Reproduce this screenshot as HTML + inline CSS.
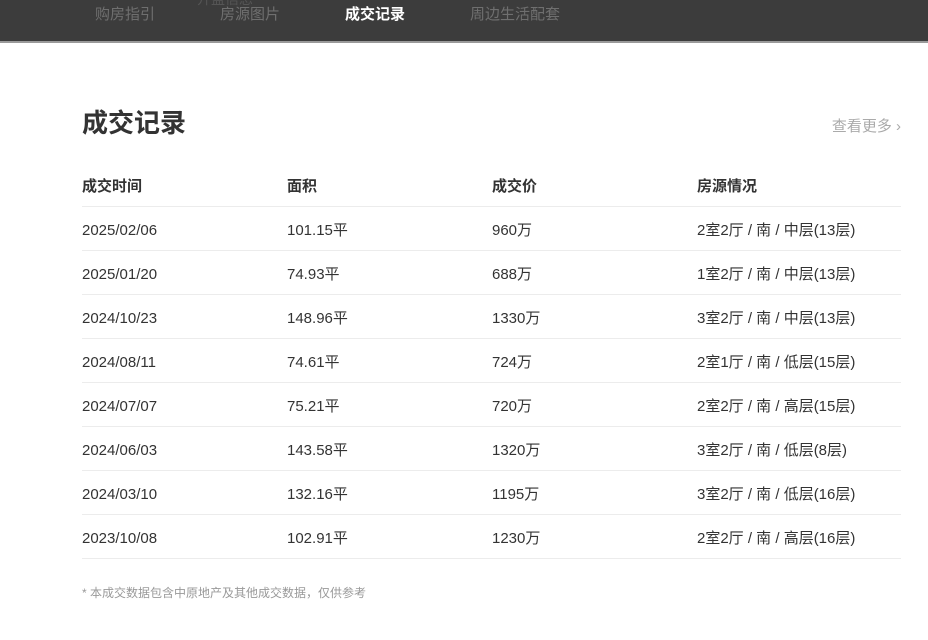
<!DOCTYPE html>
<html><head><meta charset="utf-8"><style>
body{margin:0;width:928px;height:640px;background:#fff;font-family:"Liberation Sans","Noto Sans CJK SC",sans-serif;overflow:hidden;position:relative}
.nav{position:absolute;left:0;top:0;width:928px;height:41px;background:#3c3c3c;border-bottom:2px solid #9a9a9a}
.nav span{position:absolute;top:5px;font-size:15px;line-height:20px;color:#6f6f6f}
.nav .a{color:#fff;font-weight:bold}
h1{position:absolute;left:82px;top:105px;margin:0;font-size:26px;line-height:36px;color:#333;font-weight:bold}
.more{position:absolute;right:27px;top:117px;font-size:15px;line-height:20px;color:#aaa}
.t{position:absolute;left:82px;top:163px;width:819px}
.r{height:43px;border-bottom:1px solid #ececec;position:relative;font-size:15px;color:#333}
.r span{position:absolute;top:14px;line-height:20px}
.h{font-weight:bold;font-size:15px}
.c1{left:0}.c2{left:205px}.c3{left:410px}.c4{left:615px}
.note{position:absolute;left:82px;top:585px;font-size:12px;line-height:16px;color:#999}
</style></head><body>
<div class="nav">
<span style="left:95px">购房指引</span>
<span style="left:220px">房源图片</span>
<span style="left:197px;top:-11px;color:#555;font-size:14px">开盘信息</span>
<span class="a" style="left:345px">成交记录</span>
<span style="left:470px">周边生活配套</span>
</div>
<h1>成交记录</h1>
<div class="more">查看更多 ›</div>
<div class="t">
<div class="r h"><span class="c1">成交时间</span><span class="c2">面积</span><span class="c3">成交价</span><span class="c4">房源情况</span></div>
<div class="r"><span class="c1">2025/02/06</span><span class="c2">101.15平</span><span class="c3">960万</span><span class="c4">2室2厅 / 南 / 中层(13层)</span></div>
<div class="r"><span class="c1">2025/01/20</span><span class="c2">74.93平</span><span class="c3">688万</span><span class="c4">1室2厅 / 南 / 中层(13层)</span></div>
<div class="r"><span class="c1">2024/10/23</span><span class="c2">148.96平</span><span class="c3">1330万</span><span class="c4">3室2厅 / 南 / 中层(13层)</span></div>
<div class="r"><span class="c1">2024/08/11</span><span class="c2">74.61平</span><span class="c3">724万</span><span class="c4">2室1厅 / 南 / 低层(15层)</span></div>
<div class="r"><span class="c1">2024/07/07</span><span class="c2">75.21平</span><span class="c3">720万</span><span class="c4">2室2厅 / 南 / 高层(15层)</span></div>
<div class="r"><span class="c1">2024/06/03</span><span class="c2">143.58平</span><span class="c3">1320万</span><span class="c4">3室2厅 / 南 / 低层(8层)</span></div>
<div class="r"><span class="c1">2024/03/10</span><span class="c2">132.16平</span><span class="c3">1195万</span><span class="c4">3室2厅 / 南 / 低层(16层)</span></div>
<div class="r"><span class="c1">2023/10/08</span><span class="c2">102.91平</span><span class="c3">1230万</span><span class="c4">2室2厅 / 南 / 高层(16层)</span></div>
</div>
<div class="note">* 本成交数据包含中原地产及其他成交数据，仅供参考</div>
</body></html>
